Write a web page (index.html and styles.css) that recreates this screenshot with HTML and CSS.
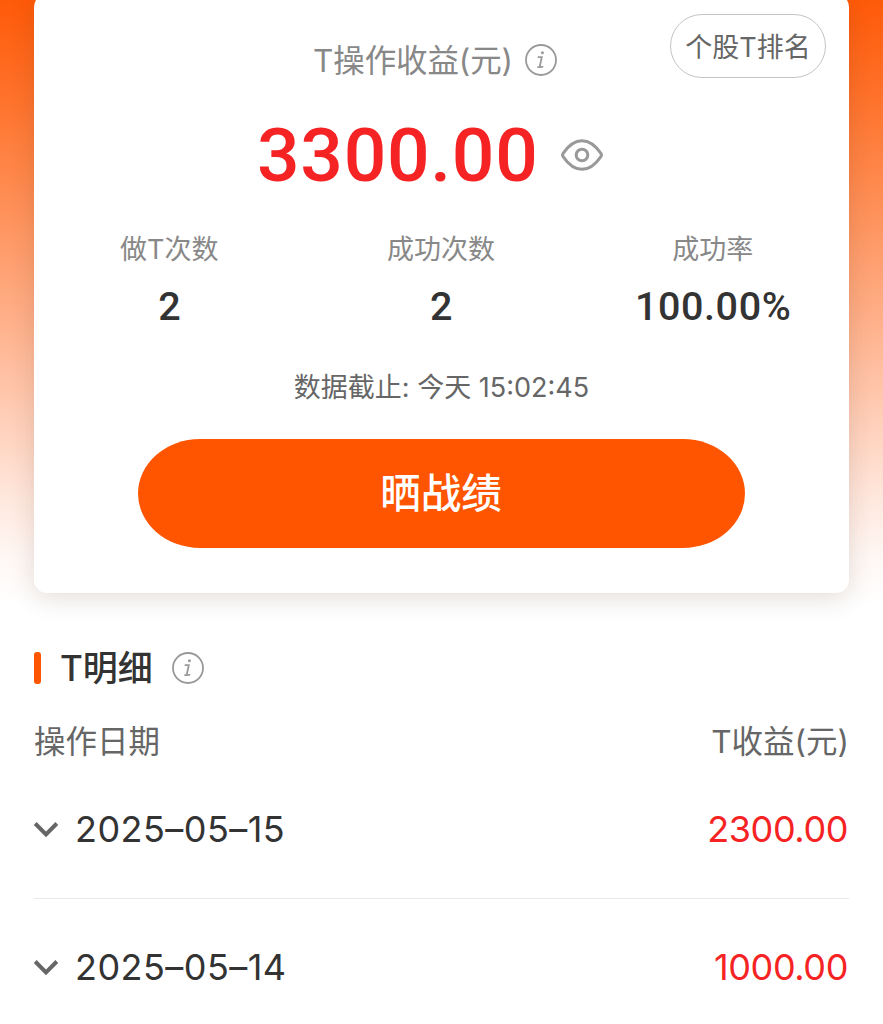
FILE: index.html
```html
<!DOCTYPE html>
<html lang="zh-CN">
<head>
<meta charset="utf-8">
<title>T操作收益</title>
<link rel="stylesheet" href="styles.css">
</head>
<body>
<div class="page">
  <section class="card">
    <button class="rank">个股T排名</button>
    <div class="title"><span class="title-text">T操作收益(元)</span>
      <svg class="info" viewBox="0 0 32 32"><circle cx="16" cy="16" r="15"/><circle class="dot" cx="17.4" cy="8.8" r="1.5"/><path d="M12.7 13.2H16.8L14.8 22.2Q14.5 23.3 16 23.1L18.3 22.5M12.3 23.2H15.5"/></svg>
    </div>
    <div class="total"><span class="total-text">3300.00</span>
      <svg class="eye" viewBox="0 0 42 32"><path d="M2.1 14.4C7.6 6.3 14 1.7 21 1.7S34.4 6.3 39.9 14.4Q41 16 39.9 17.6C34.4 25.7 28 30.3 21 30.3S7.6 25.7 2.1 17.6Q1 16 2.1 14.4Z"/><circle cx="21" cy="16" r="5.8"/></svg>
    </div>
    <div class="stats">
      <div class="stat"><span class="label">做T次数</span><b class="value">2</b></div>
      <div class="stat"><span class="label">成功次数</span><b class="value">2</b></div>
      <div class="stat"><span class="label">成功率</span><b class="value">100.00%</b></div>
    </div>
    <p class="cutoff">数据截止: 今天 <span class="time">15:02:45</span></p>
    <button class="share">晒战绩</button>
  </section>
  <section class="detail">
    <h2 class="heading"><i class="bar"></i><span class="heading-text">T明细</span>
      <svg class="info" viewBox="0 0 32 32"><circle cx="16" cy="16" r="15"/><circle class="dot" cx="17.4" cy="8.8" r="1.5"/><path d="M12.7 13.2H16.8L14.8 22.2Q14.5 23.3 16 23.1L18.3 22.5M12.3 23.2H15.5"/></svg>
    </h2>
    <div class="columns"><span>操作日期</span><span>T收益(元)</span></div>
    <div class="row"><svg class="chevron" viewBox="0 0 24 15"><path d="M1.2 1.5 12 12.3 22.8 1.5"/></svg><span class="date">2025–05–15</span><span class="amount">2300.00</span></div>
    <div class="row"><svg class="chevron" viewBox="0 0 24 15"><path d="M1.2 1.5 12 12.3 22.8 1.5"/></svg><span class="date">2025–05–14</span><span class="amount">1000.00</span></div>
  </section>
</div>
</body>
</html>
```
FILE: styles.css
```css
* { box-sizing: border-box; }
body {
  margin: 0;
  background: #fff;
  color: #333;
  font-family: Inter, "Noto Sans CJK SC", sans-serif;
}
button { font-family: inherit; padding: 0; }
.page {
  height: 1024px;
  overflow: hidden;
  padding: 0 34px;
  display: flow-root;
  background: linear-gradient(#ff5a08 0, #ff7028 90px, #ff8648 170px, #ffad85 310px, #ffd2bd 430px, #ffe8de 500px, #fff8f5 560px, #fff 605px) no-repeat;
}
.card {
  position: relative;
  height: 599px;
  margin-top: -6px;
  padding-top: 40px;
  border-radius: 13px;
  background: #fff;
  box-shadow: 0 5px 26px rgba(70, 40, 20, .15);
}
.rank {
  position: absolute;
  top: 20px;
  right: 23px;
  width: 156px;
  height: 64px;
  padding-bottom: 2px;
  border: 1.5px solid #c4c4c4;
  border-radius: 32px;
  background: #fff;
  color: #666;
  font-size: 27px;
}
.title {
  display: flex;
  align-items: center;
  height: 52px;
  padding-left: 279px;
  color: #888;
  font-size: 31.5px;
}
.title-text {
  width: 212px;
  padding-bottom: 4px;
  letter-spacing: -.1px;
  white-space: nowrap;
}
.info {
  width: 32px;
  height: 32px;
  fill: none;
  stroke: #999;
  stroke-width: 1.8;
}
.info .dot { fill: #999; stroke: none; }
.total {
  display: flex;
  align-items: center;
  height: 90px;
  margin-top: 23px;
  padding-left: 223px;
  color: #f52323;
}
.total-text {
  width: 304px;
  padding-top: 2px;
  font-family: Roboto, sans-serif;
  font-size: 75px;
  font-weight: 500;
  letter-spacing: .7px;
}
.eye {
  width: 42px;
  height: 32px;
  margin-top: 2px;
  fill: none;
  stroke: #999;
  stroke-width: 3;
}
.stats {
  display: grid;
  grid-template-columns: repeat(3, 1fr);
  margin-top: 30px;
}
.stat { display: flex; flex-direction: column; align-items: center; }
.label { margin-left: -1px; line-height: 42px; font-size: 27px; color: #888; }
.value {
  margin-top: 11px;
  line-height: 50px;
  font-family: Roboto, sans-serif;
  font-size: 39.5px;
  font-weight: 500;
  letter-spacing: .6px;
}
.cutoff {
  margin: 35px 0 0;
  line-height: 42px;
  text-align: center;
  font-size: 27px;
  color: #666;
}
.share {
  display: block;
  width: 607px;
  height: 109px;
  margin: 30px 0 0 104px;
  padding: 0 1px 6px 0;
  border: 0;
  border-radius: 62px / 54.5px;
  background: #ff5500;
  color: #fff;
  font-size: 40.5px;
  font-weight: 500;
}
.heading {
  display: flex;
  align-items: center;
  height: 60px;
  margin: 45px 0 0;
  font-size: 35px;
  font-weight: 500;
}
.bar { width: 7px; height: 32px; border-radius: 3px; background: #ff5500; }
.heading-text { width: 112px; margin-left: 19px; padding-bottom: 5px; }
.columns {
  display: flex;
  justify-content: space-between;
  align-items: center;
  height: 50px;
  margin-top: 16px;
  font-size: 31.5px;
  color: #666;
}
.row {
  display: flex;
  align-items: center;
  height: 137px;
  font-size: 36px;
}
.row + .row { border-top: 1px solid #e8e8e8; }
.columns + .row { height: 134px; padding-bottom: 4px; }
.chevron { width: 24px; height: 15px; overflow: visible; fill: none; stroke: #666; stroke-width: 4; }
.date { margin-left: 17px; letter-spacing: .45px; }
.amount { margin: 0 1px 0 auto; letter-spacing: -.4px; color: #f52323; }
```
